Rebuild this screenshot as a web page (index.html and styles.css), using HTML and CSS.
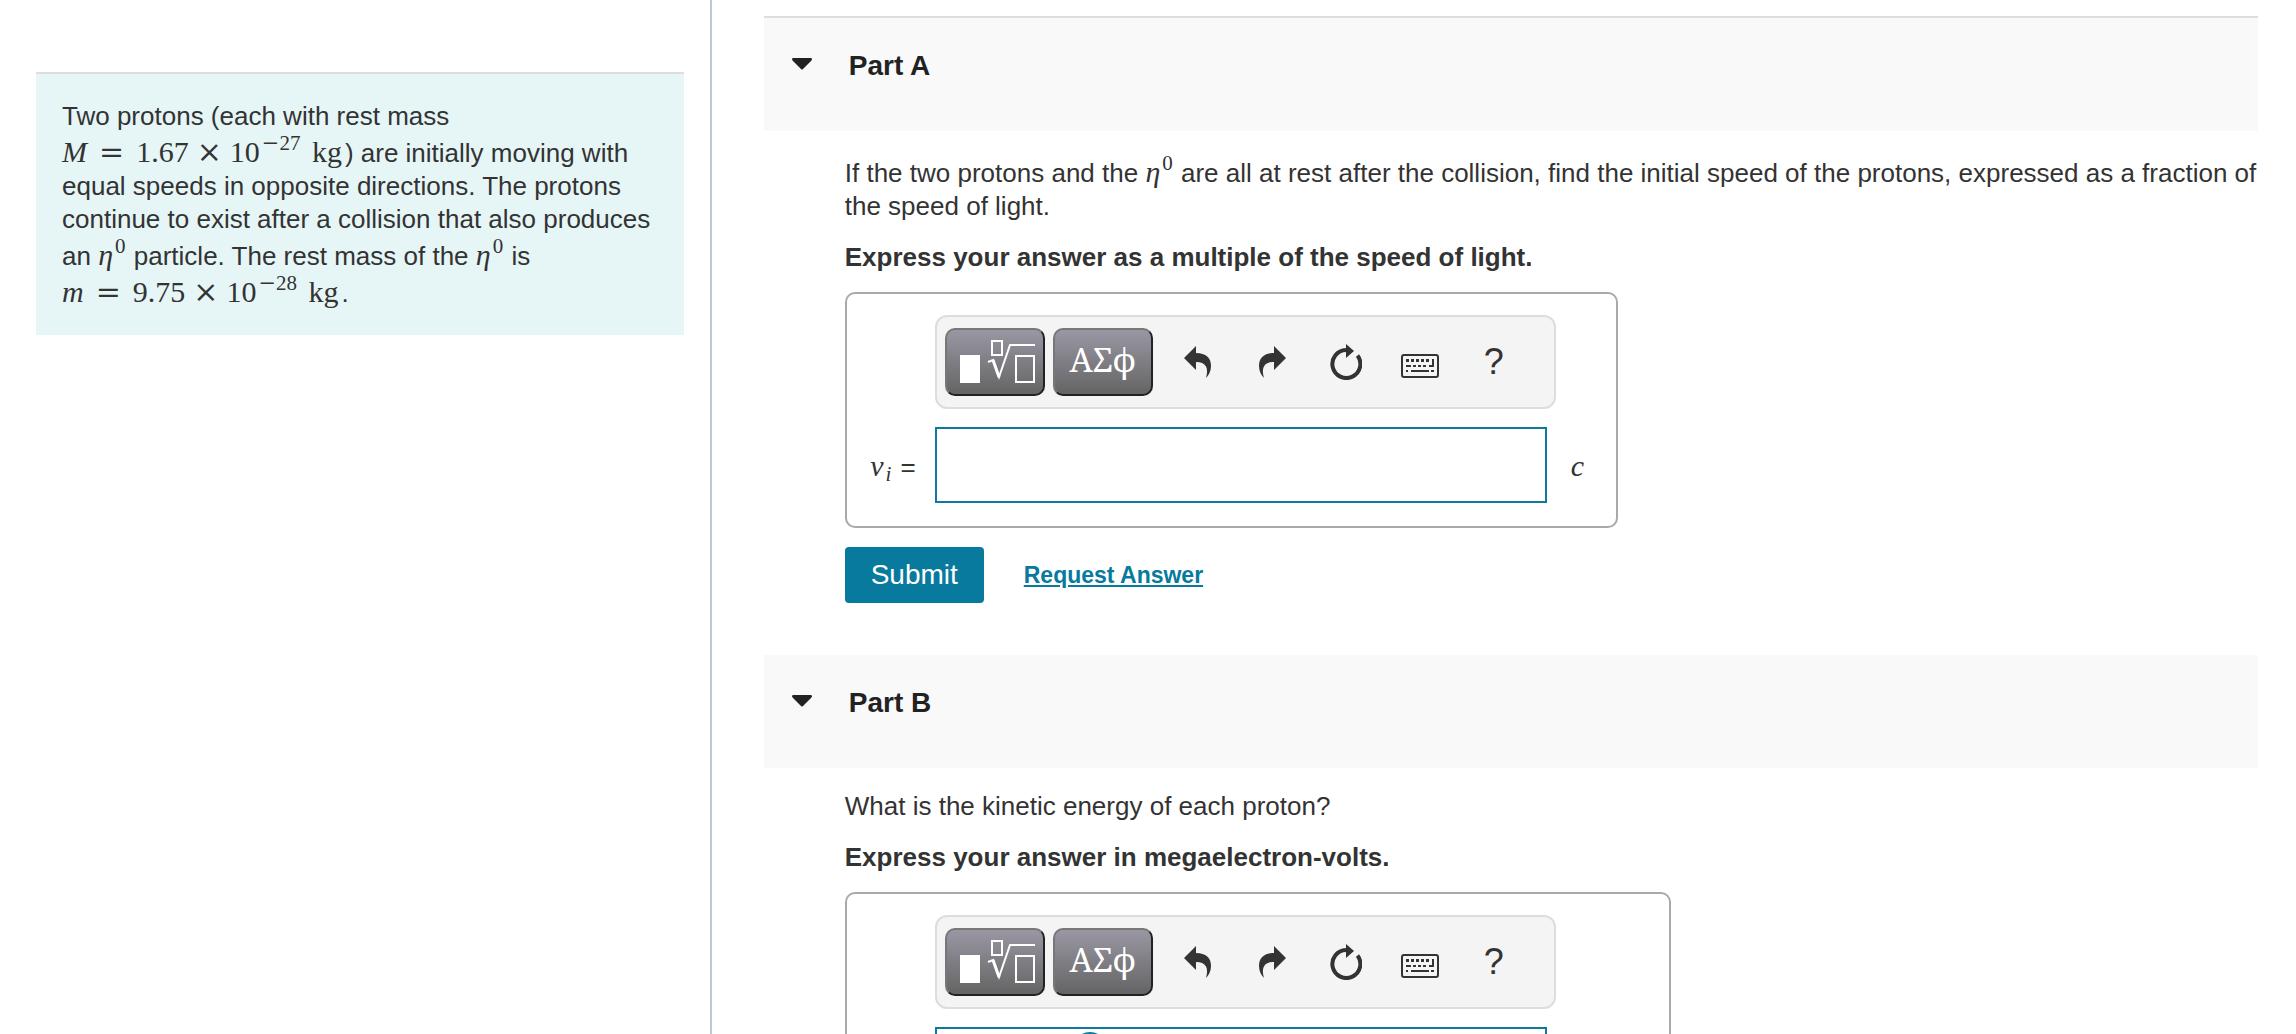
FILE: index.html
```
<!DOCTYPE html>
<html lang="en">
<head>
    <meta charset="utf-8">
    <title>Proton Collision</title>
    <link rel="stylesheet" href="styles.css">
</head>
<body>
    <!-- shared icons -->
    <svg class="sprite" aria-hidden="true">
        <symbol id="icon-template" viewBox="0 0 76 44">
            <rect x="0" y="15" width="20" height="28" fill="#fff"/>
            <rect x="32" y="1" width="10" height="14" fill="none" stroke="#fff" stroke-width="2"/>
            <path d="M28 22l5-2 6 17L50 5h25" fill="none" stroke="#fff" stroke-width="2"/>
            <path d="M33 20l6 17" fill="none" stroke="#fff" stroke-width="3"/>
            <rect x="56" y="16" width="18" height="26" fill="none" stroke="#fff" stroke-width="2"/>
        </symbol>
        <symbol id="icon-undo" viewBox="0 0 28 32">
            <path d="M0 12L12 0v7c10 0 15 5 15 13 0 5-2 9-5 12 3-10 0-16-10-16v8z"/>
        </symbol>
        <symbol id="icon-redo" viewBox="0 0 28 32">
            <path d="M28 12L16 0v7C6 7 1 12 1 20c0 5 2 9 5 12-3-10 0-16 10-16v8z"/>
        </symbol>
        <symbol id="icon-reset" viewBox="0 0 32 36">
            <path d="M27.500 11.500a14 14 0 1 1-11.500-5.500" fill="none" stroke="#333" stroke-width="4"/>
            <path d="M16 0l8 7-8 7z"/>
        </symbol>
        <symbol id="icon-keyboard" viewBox="0 0 40 24">
            <rect x="2" y="1" width="36" height="22" rx="2" fill="none" stroke="#333" stroke-width="2"/>
            <path d="M6 5h3v3H6zM11 5h3v3h-3zM16 5h3v3h-3zM21 5h3v3h-3zM26 5h3v3h-3zM32 5h2v8h-5v-2h3zM6 11h5v2H6zM13 11h3v2h-3zM18 11h3v2h-3zM23 11h3v2h-3zM6 16h2v2H6zM11 16h18v2H11zM31 16h3v2h-3z"/>
        </symbol>
    </svg>

    <main class="layout">
        <aside class="sidebar">
            <div class="intro">
                Two protons (each with rest mass
                <span class="math"><i>M</i><span class="rel">=</span>1.67<span class="bin">×</span>10<sup><span class="neg">−</span>27</sup> <span class="kg">kg</span></span>)
                are initially moving with equal speeds in opposite directions. The protons
                continue to exist after a collision that also produces an
                <span class="math"><i>η</i><sup>0</sup></span> particle. The rest mass of the
                <span class="math"><i>η</i><sup>0</sup></span> is
                <span class="math"><i>m</i><span class="rel">=</span>9.75<span class="bin">×</span>10<sup><span class="neg">−</span>28</sup> <span class="kg">kg</span></span>.
            </div>
        </aside>

        <div class="content">
            <section class="part">
                <header class="part-header first">
                    <svg class="caret" viewBox="0 0 20 12"><path d="M1 0h18q2 1 0 3l-8 8q-1 1-2 0L1 3q-2-2 0-3z"/></svg>
                    <h2>Part A</h2>
                </header>
                <div class="part-body">
                    <p>If the two protons and the <span class="math"><i>η</i><sup>0</sup></span> are all at rest after the collision, find the initial speed of the protons, expressed as a fraction of the speed of light.</p>
                    <p class="instructions">Express your answer as a multiple of the speed of light.</p>
                    <form class="answer" id="form-a">
                        <div class="toolbar">
                            <button type="button" class="palette" aria-label="Templates"><svg class="template"><use href="#icon-template"/></svg></button>
                            <button type="button" class="palette symbols">ΑΣϕ</button>
                            <button type="button" class="tool" aria-label="Undo"><svg width="28" height="32"><use href="#icon-undo"/></svg></button>
                            <button type="button" class="tool" aria-label="Redo"><svg width="28" height="32"><use href="#icon-redo"/></svg></button>
                            <button type="button" class="tool" aria-label="Reset"><svg width="32" height="36"><use href="#icon-reset"/></svg></button>
                            <button type="button" class="tool keyboard" aria-label="Keyboard"><svg width="40" height="24"><use href="#icon-keyboard"/></svg></button>
                            <button type="button" class="tool help">?</button>
                        </div>
                        <label class="variable" for="answer-a"><span class="math"><i>v<sub>i</sub></i></span> =</label>
                        <input type="text" id="answer-a">
                        <span class="unit math"><i>c</i></span>
                    </form>
                    <div class="actions">
                        <button type="submit" form="form-a" class="submit">Submit</button>
                        <a href="#">Request Answer</a>
                    </div>
                </div>
            </section>

            <section class="part">
                <header class="part-header">
                    <svg class="caret" viewBox="0 0 20 12"><path d="M1 0h18q2 1 0 3l-8 8q-1 1-2 0L1 3q-2-2 0-3z"/></svg>
                    <h2>Part B</h2>
                </header>
                <div class="part-body">
                    <p>What is the kinetic energy of each proton?</p>
                    <p class="instructions">Express your answer in megaelectron-volts.</p>
                    <form class="answer wide">
                        <div class="toolbar">
                            <button type="button" class="palette" aria-label="Templates"><svg class="template"><use href="#icon-template"/></svg></button>
                            <button type="button" class="palette symbols">ΑΣϕ</button>
                            <button type="button" class="tool" aria-label="Undo"><svg width="28" height="32"><use href="#icon-undo"/></svg></button>
                            <button type="button" class="tool" aria-label="Redo"><svg width="28" height="32"><use href="#icon-redo"/></svg></button>
                            <button type="button" class="tool" aria-label="Reset"><svg width="32" height="36"><use href="#icon-reset"/></svg></button>
                            <button type="button" class="tool keyboard" aria-label="Keyboard"><svg width="40" height="24"><use href="#icon-keyboard"/></svg></button>
                            <button type="button" class="tool help">?</button>
                        </div>
                        <div class="field">
                            <input type="text" id="answer-b" aria-label="Kinetic energy">
                            <span class="marker"></span>
                        </div>
                    </form>
                </div>
            </section>
        </div>
    </main>
</body>
</html>
```
FILE: styles.css
```
* {
    box-sizing: border-box;
}

body {
    margin: 0;
    font-family: "Liberation Sans", Arial, sans-serif;
    font-size: 26px;
    line-height: 33px;
    color: #333;
    background-color: #fff;
}

.sprite {
    display: none;
}

.layout {
    display: grid;
    grid-template-columns: 31% 1fr;
    height: 100vh;
    overflow: hidden;
}

.sidebar {
    padding: 72px 26px 0 36px;
    border-right: 2px solid #b9cbdb;
}

.intro {
    padding: 26px 26px 25px;
    background-color: #e6f6f7;
    border-top: 2px solid #ddd;
}

.content {
    padding: 16px 38px 0 52px;
    overflow: hidden;
}

/* math */
.math {
    font-family: "Liberation Serif", "Times New Roman", serif;
    font-size: 30px;
    line-height: 37px;
    white-space: nowrap;
}

.math sup,
.math sub {
    font-size: 21px;
    line-height: 0;
}

.math sup {
    margin: 0 1px 0 2px;
    vertical-align: 12px;
}

.math sub {
    margin: 0 2px;
    vertical-align: -5px;
}

.rel,
.bin,
.neg {
    font-family: "DejaVu Serif", serif;
    line-height: 0;
}

.rel {
    margin: 0 12px;
}

.bin {
    margin: 0 8px;
}

.kg {
    margin: 0 3px;
}

/* parts */
.part-header {
    display: flex;
    align-items: flex-start;
    gap: 37px;
    height: 113px;
    padding: 31px 28px;
    background-color: #f9f9f9;
    color: #222;
}

.part-header.first {
    height: 115px;
    border-top: 2px solid #ddd;
}

.part-header h2 {
    margin: 0;
    font-size: 28px;
    line-height: 33px;
}

.caret {
    width: 20px;
    height: 12px;
    margin-top: 9px;
    fill: #222;
}

.part-body {
    padding: 22px 0 52px 81px;
}

.part-body p {
    margin: 0 0 18px;
}

.part-body .instructions {
    font-weight: bold;
}

.answer {
    display: grid;
    grid-template-columns: 65px 612px 1fr;
    row-gap: 18px;
    align-items: center;
    width: 773px;
    padding: 21px 0 23px 23px;
    border: 2px solid #a9a9a9;
    border-radius: 10px;
}

.answer.wide {
    width: 826px;
}

.toolbar {
    grid-column: 2 / 4;
    display: flex;
    align-items: center;
    width: 621px;
    height: 94px;
    padding: 0 8px;
    border: 2px solid #ddd;
    border-radius: 12px;
    background-color: #f4f4f4;
}

.toolbar button {
    padding: 0;
    font-family: inherit;
    color: #333;
}

.toolbar .palette {
    width: 100px;
    height: 68px;
    margin-right: 8px;
    border: 2px outset #777;
    border-radius: 10px;
    background-image: linear-gradient(#9a97a3, #646464);
    color: #fff;
    font-family: "Noto Serif", "DejaVu Serif", serif;
    font-size: 33px;
}

.toolbar .symbols {
    padding-bottom: 6px;
}

.template {
    display: block;
    width: 76px;
    height: 44px;
    margin-left: 13px;
}

.tool {
    width: 74px;
    height: 68px;
    border: 0;
    background: none;
}

.tool svg {
    display: block;
    margin: 0 auto;
    fill: #333;
}

.toolbar .keyboard {
    padding-top: 8px;
}

.toolbar .help {
    font-size: 36px;
}

.variable {
    padding-right: 19px;
    text-align: right;
    white-space: nowrap;
}

.answer input {
    width: 100%;
    height: 76px;
    padding: 0 12px;
    border: 2px solid #0b7a9e;
    font-size: 26px;
}

.field {
    grid-column: 2;
    position: relative;
}

.marker {
    position: absolute;
    top: 5px;
    left: 138px;
    width: 34px;
    height: 34px;
    border: 2px solid #0b7a9e;
    border-radius: 50%;
}

.unit {
    padding-left: 24px;
}

.actions {
    display: flex;
    align-items: center;
    gap: 40px;
    margin-top: 19px;
}

.submit {
    width: 139px;
    height: 56px;
    border: 0;
    border-radius: 4px;
    background-color: #077a9d;
    color: #fff;
    font-family: inherit;
    font-size: 28px;
}

.actions a {
    color: #077a9d;
    font-size: 23px;
    font-weight: bold;
}
```
